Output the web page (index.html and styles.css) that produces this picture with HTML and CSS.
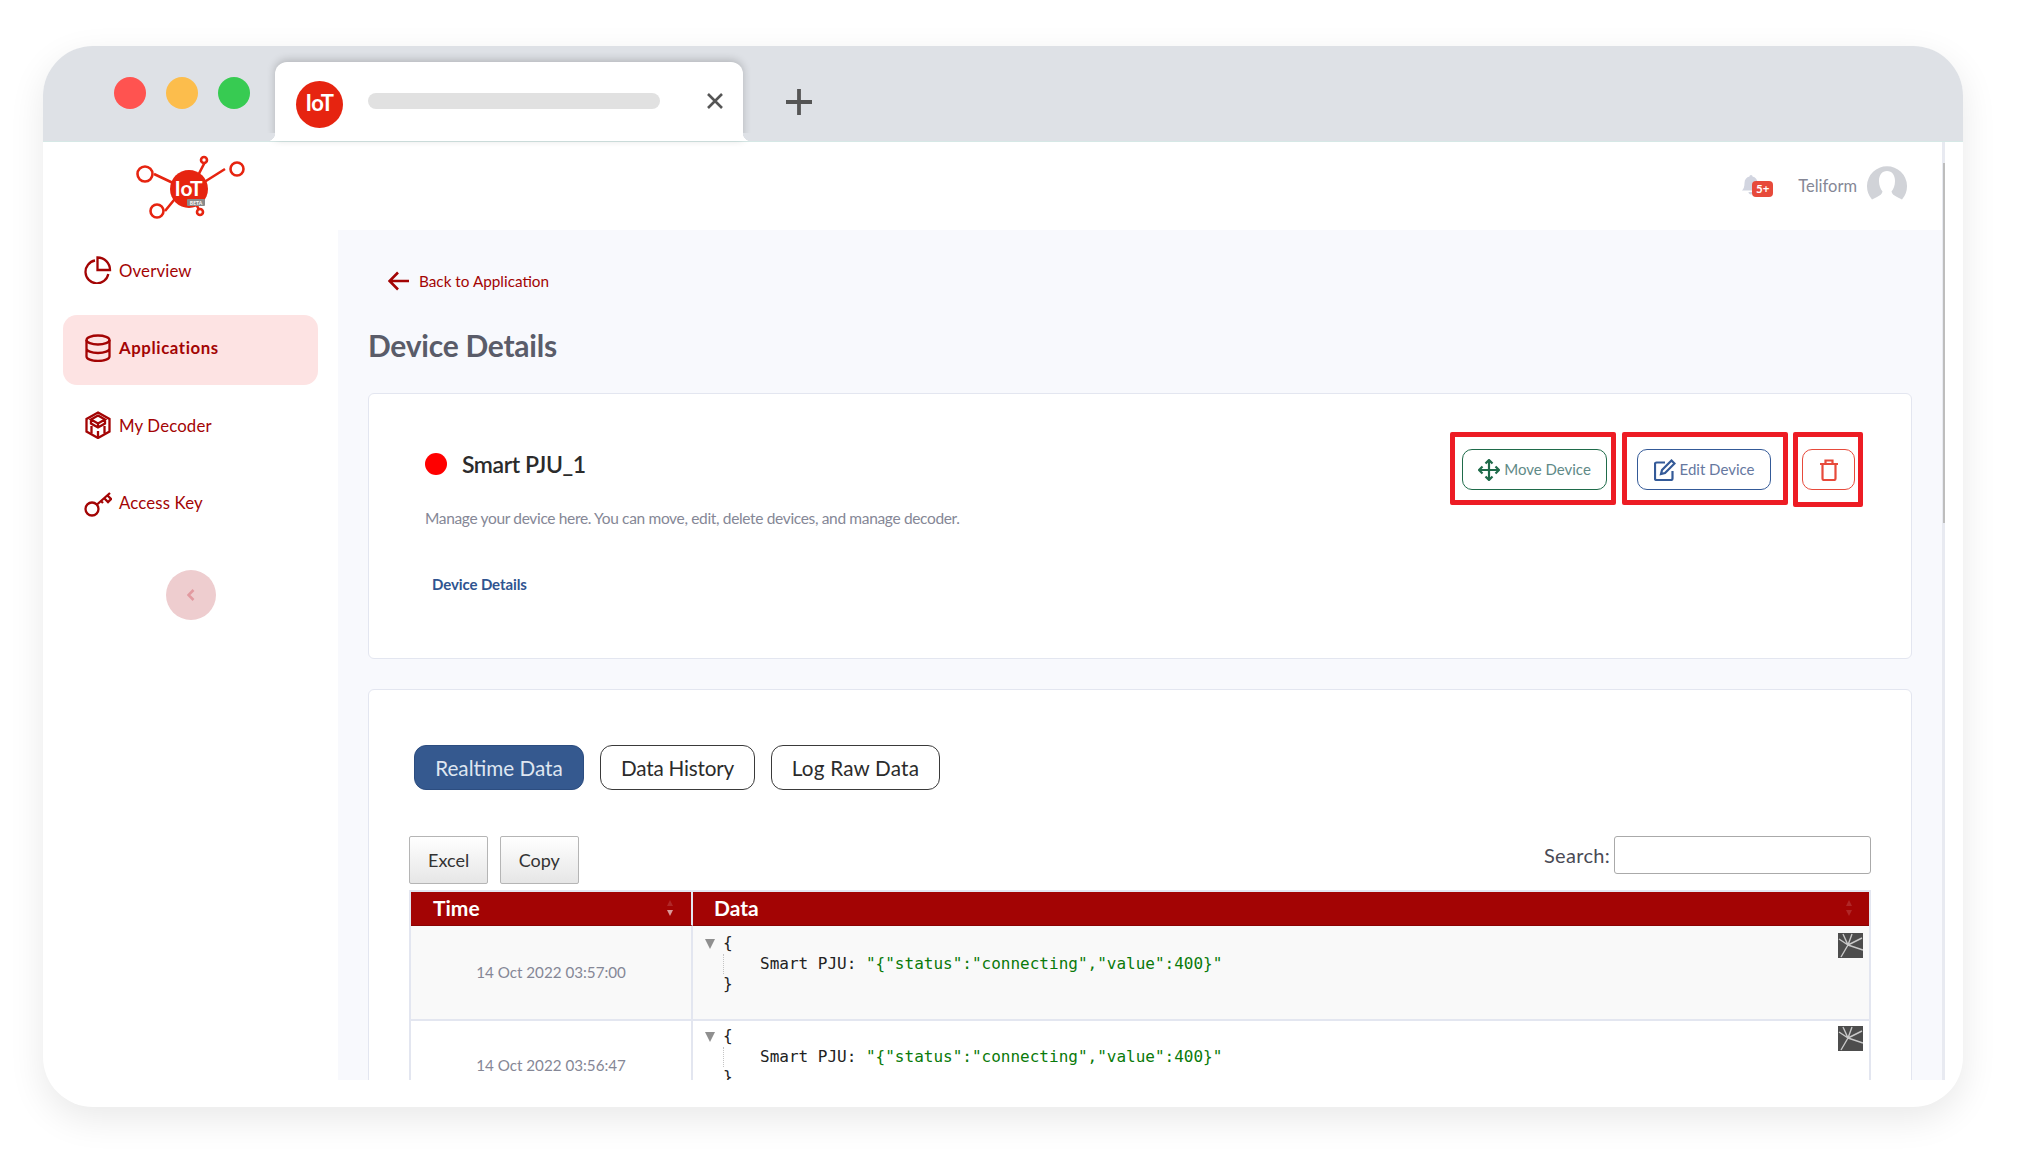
FILE: index.html
```html
<!DOCTYPE html>
<html lang="en">
<head>
<meta charset="utf-8">
<title>Device Details</title>
<link rel="stylesheet" href="styles.css">
</head>
<body>
<div class="window">
  <header class="chrome">
    <div class="lights"><span class="light red"></span><span class="light yellow"></span><span class="light green"></span></div>
    <div class="tab">
      <span class="favicon">IoT</span>
      <span class="tab-title"></span>
      <svg class="tab-close" viewBox="0 0 16 16"><path d="M1 1l14 14M15 1L1 15"/></svg>
    </div>
    <svg class="tab-new" viewBox="0 0 26 26"><path d="M13 0v26M0 13h26"/></svg>
  </header>
  <div class="app">
    <aside class="sidebar">
      <div class="logo">
        <svg viewBox="0 0 120 70" width="120" height="70">
          <g class="logo-lines">
            <path d="M26 25L62 42M62 42L97 20M55 40L37 62M62 42L78 11M62 42L72 63"/>
            <circle cx="17" cy="25" r="7.5"/><circle cx="109" cy="20" r="6.5"/><circle cx="29" cy="62" r="6.5"/><circle cx="76" cy="11" r="3"/><circle cx="72" cy="63" r="3"/>
          </g>
          <circle class="logo-core" cx="61" cy="40" r="19"/>
          <text class="logo-text" x="60.5" y="47" text-anchor="middle">IoT</text>
          <rect class="logo-beta-bg" x="59" y="50" width="18" height="7" rx="1"/>
          <text class="logo-beta" x="68" y="55.6" text-anchor="middle">BETA</text>
        </svg>
      </div>
      <nav class="nav">
        <a class="nav-item">
          <svg class="nav-icon" viewBox="0 0 28 28"><path d="M11 4.5a11.5 11.5 0 1 0 13.300 13.500"/><path d="M13.500 1.500V14H26A12.500 12.500 0 0 0 13.500 1.500z"/></svg>
          <span>Overview</span>
        </a>
        <a class="nav-item active">
          <svg class="nav-icon" viewBox="0 0 28 28"><ellipse cx="14" cy="6" rx="11.500" ry="4.500"/><path d="M2.500 6v16.500c0 2.500 5 4.500 11.500 4.500s11.500-2 11.500-4.500V6M2.500 14.500c0 2.500 5 4.500 11.500 4.500s11.500-2 11.500-4.500"/></svg>
          <span>Applications</span>
        </a>
        <a class="nav-item">
          <svg class="nav-icon" viewBox="0 0 28 28"><path d="M14 1.500l11.500 6.500v12.500L14 27 2.500 20.500V8z"/><path d="M14 4.500l7 4-7 4-7-4zM14 12.500V16M7 8.500v4L14 16.500l7-4v-4M7.500 15v7.500M20.500 15v7.500M14 20v6"/></svg>
          <span>My Decoder</span>
        </a>
        <a class="nav-item">
          <svg class="nav-icon" viewBox="0 0 28 28"><circle cx="8" cy="20" r="6.500"/><path d="M13 15.500L26 4M20 9l4 4 3-3-4-4M17 12l2 2"/></svg>
          <span>Access Key</span>
        </a>
      </nav>
      <button class="collapse"><svg viewBox="0 0 8 12" width="8" height="12"><path d="M6.500 1L1.500 6l5 5"/></svg></button>
    </aside>
    <div class="page">
      <div class="topbar">
        <span class="bell">
          <svg viewBox="0 0 20 22" width="20" height="22"><path d="M10 1c1 0 1.500.8 1.500 1.500 3 .8 5 3 5 6.500 0 4 1 6 2.500 7.500H1C2.500 15 3.500 13 3.500 9c0-3.500 2-5.700 5-6.500C8.500 1.800 9 1 10 1zM7.500 18h5c0 1.500-1 2.500-2.500 2.500S7.500 19.500 7.500 18z"/></svg>
          <span class="badge">5+</span>
        </span>
        <span class="username">Teliform</span>
        <svg class="avatar" viewBox="0 0 40 40" width="40" height="40"><path class="avatar-bg" d="M5 34.500A20 20 0 1 1 35 34.500L30 32c-3-1.500-5-3-5.500-5.500 2-2.500 3.500-6 3.500-10.500C28 10 25 6 20 6S12 10 12 16c0 4.500 1.500 8 3.500 10.500C15 29 13 30.500 10 32z"/></svg>
      </div>
      <main class="main">
        <a class="back">
          <svg viewBox="0 0 22 20" width="22" height="20"><path d="M21 10H2M10 1.500L1.500 10l8.500 8.500"/></svg>
          <span>Back to Application</span>
        </a>
        <h1 class="heading">Device Details</h1>
        <section class="card card-device">
          <div class="device-info">
            <div class="device-title"><span class="status-dot"></span><span class="device-name">Smart PJU_1</span></div>
            <p class="device-sub">Manage your device here. You can move, edit, delete devices, and manage decoder.</p>
            <a class="device-link">Device Details</a>
          </div>
          <div class="actions">
            <button class="btn btn-move">
              <svg viewBox="0 0 22 22" width="22" height="22"><path d="M11 1v20M1 11h20M7.500 4.500L11 1l3.500 3.500M7.500 17.500L11 21l3.500-3.500M4.500 7.500L1 11l3.500 3.500M17.500 7.500L21 11l-3.500 3.500"/></svg>
              <span>Move Device</span>
            </button>
            <button class="btn btn-edit">
              <svg viewBox="0 0 22 22" width="22" height="22"><path d="M11 3.500H2.500a1.500 1.500 0 0 0-1.500 1.500v14.500A1.500 1.500 0 0 0 2.500 21H17a1.500 1.500 0 0 0 1.500-1.500V12"/><path d="M8 11L17.500 1.500l3 3L11 14l-4 1z"/></svg>
              <span>Edit Device</span>
            </button>
            <button class="btn btn-delete">
              <svg viewBox="0 0 20 22" width="20" height="22"><path d="M1 5h18M6.500 5V1.500h7V5M3.500 5v14.500a1.500 1.500 0 0 0 1.500 1.500h10a1.500 1.500 0 0 0 1.500-1.500V5"/></svg>
            </button>
          </div>
        </section>
        <section class="card card-data">
          <div class="tabs">
            <button class="tab-btn tab-realtime on">Realtime Data</button>
            <button class="tab-btn tab-history">Data History</button>
            <button class="tab-btn tab-log">Log Raw Data</button>
          </div>
          <div class="toolbar">
            <div class="export"><button class="export-btn">Excel</button><button class="export-btn">Copy</button></div>
            <label class="search">Search:<input class="search-input" type="text"></label>
          </div>
          <table class="table">
            <thead>
              <tr>
                <th class="col-time">Time<span class="sort"><i class="up"></i><i class="down on"></i></span></th>
                <th class="col-data">Data<span class="sort end"><i class="up"></i><i class="down"></i></span></th>
              </tr>
            </thead>
            <tbody>
              <tr class="odd">
                <td class="time">14 Oct 2022 03:57:00</td>
                <td class="data">
                  <div class="cell">
                    <div class="json">
                      <span class="caret"></span>
                      <div class="json-line">{</div>
                      <div class="json-body">Smart PJU: <span class="str">"{"status":"connecting","value":400}"</span></div>
                      <div class="json-line">}</div>
                    </div>
                    <svg class="broken" viewBox="0 0 25 25" width="25" height="25"><rect width="25" height="25"/><path d="M10 12L1 6M10 12L5 1M10 12L14 1M10 12L3 24M10 12L24 5M10 12L25 17"/></svg>
                  </div>
                </td>
              </tr>
              <tr>
                <td class="time">14 Oct 2022 03:56:47</td>
                <td class="data">
                  <div class="cell">
                    <div class="json">
                      <span class="caret"></span>
                      <div class="json-line">{</div>
                      <div class="json-body">Smart PJU: <span class="str">"{"status":"connecting","value":400}"</span></div>
                      <div class="json-line">}</div>
                    </div>
                    <svg class="broken" viewBox="0 0 25 25" width="25" height="25"><rect width="25" height="25"/><path d="M10 12L1 6M10 12L5 1M10 12L14 1M10 12L3 24M10 12L24 5M10 12L25 17"/></svg>
                  </div>
                </td>
              </tr>
            </tbody>
          </table>
        </section>
      </main>
    </div>
    <div class="scrollbar"><span class="thumb"></span></div>
  </div>
</div>
</body>
</html>
```

FILE: styles.css
```css
* { box-sizing: border-box; }
html, body { margin: 0; height: 100%; }
body {
  background: #fff;
  padding: 46px 0 0 43px;
  font-family: "Lato", "Liberation Sans", sans-serif;
  overflow: hidden;
}
button { font-family: inherit; cursor: pointer; }
p, h1 { margin: 0; }

.window {
  width: 1920px;
  height: 1061px;
  background: #fff;
  border-radius: 50px;
  box-shadow: 0 12px 36px rgba(0, 0, 0, .09);
  overflow: hidden;
  padding-bottom: 27px;
  display: flex;
  flex-direction: column;
}

.chrome {
  height: 96px;
  flex: none;
  background: #dee1e6;
  border-bottom: 1px solid #d6e8e6;
  display: flex;
  padding: 16px 0 0 71px;
}
.lights { display: flex; gap: 20px; padding-top: 15px; }
.light { width: 32px; height: 32px; border-radius: 50%; }
.light.red { background: #ff5350; }
.light.yellow { background: #fcbd4c; }
.light.green { background: #37cb52; }
.tab {
  position: relative;
  width: 468px;
  height: 79px;
  margin-left: 25px;
  background: #fff;
  border-radius: 12px 12px 0 0;
  box-shadow: 0 -2px 8px rgba(0, 0, 0, .2);
  display: flex;
  align-items: flex-start;
  padding: 19px 19px 0 21px;
}
.tab::before, .tab::after {
  content: "";
  position: absolute;
  bottom: 0;
  width: 8px;
  height: 8px;
}
.tab::before { left: -8px; background: radial-gradient(circle at 0 0, #dee1e6 8px, #fff 8.500px); }
.tab::after { right: -8px; background: radial-gradient(circle at 100% 0, #dee1e6 8px, #fff 8.500px); }
.favicon {
  width: 47px;
  height: 47px;
  border-radius: 50%;
  background: #e62410;
  color: #fff;
  font-weight: 700;
  font-size: 22px;
  letter-spacing: -.5px;
  line-height: 44px;
  text-align: center;
  flex: none;
}
.tab-title {
  width: 292px;
  height: 16px;
  margin: 12px 47px 0 25px;
  background: #e1e1e1;
  border-radius: 8px;
  flex: none;
}
.tab-close {
  width: 16px;
  height: 16px;
  margin-top: 12px;
  flex: none;
  fill: none;
  stroke: #555;
  stroke-width: 2.600;
}
.tab-new {
  width: 26px;
  height: 26px;
  margin: 27px 0 0 43px;
  fill: none;
  stroke: #555;
  stroke-width: 3.800;
}

.app {
  flex: 1;
  min-height: 0;
  display: flex;
  padding-right: 18px;
}
.sidebar {
  width: 295px;
  flex: none;
  padding: 0 20px;
  display: flex;
  flex-direction: column;
}
.logo {
  height: 88px;
  flex: none;
  margin-left: -5px;
  padding-top: 7px;
  display: flex;
  justify-content: center;
}
.logo-lines { fill: #fff; stroke: #e62410; stroke-width: 2.600; }
.logo-core { fill: #e62410; }
.logo-text { fill: #fff; font-size: 21px; font-weight: 700; font-family: "Lato", sans-serif; }
.logo-beta-bg { fill: #8a8a8a; }
.logo-beta { fill: #fff; font-size: 5px; font-weight: 700; font-family: "Lato", sans-serif; }

.nav { display: flex; flex-direction: column; gap: 7.600px; margin-top: 7px; }
.nav-item {
  height: 70px;
  border-radius: 14px;
  padding: 0 0 4px 21px;
  display: flex;
  align-items: center;
  gap: 7px;
  color: #a30404;
  font-size: 16.800px;
  letter-spacing: .15px;
}
.nav-item.active { background: #fde3e3; font-weight: 700; letter-spacing: .6px; }
.nav-icon {
  width: 28px;
  height: 28px;
  fill: none;
  stroke: #a30404;
  stroke-width: 2.300;
  flex: none;
}
.collapse {
  width: 50px;
  height: 50px;
  margin: 30px auto 0;
  border: 0;
  border-radius: 50%;
  background: #eecdcf;
  display: flex;
  align-items: center;
  justify-content: center;
}
.collapse svg { fill: none; stroke: #e29aa0; stroke-width: 2.600; }

.page { flex: 1; min-width: 0; display: flex; flex-direction: column; }
.topbar {
  height: 88px;
  flex: none;
  display: flex;
  align-items: center;
  padding: 0 35px 0 0;
  justify-content: flex-end;
}
.bell { position: relative; width: 34px; height: 22px; margin-right: 23px; top: -1px; }
.bell svg { fill: #d2d5e0; }
.badge {
  position: absolute;
  left: 11px;
  top: 7px;
  width: 21px;
  height: 16px;
  border-radius: 4px;
  background: #e74a3b;
  color: #fff;
  font-size: 11.500px;
  font-weight: 700;
  line-height: 16px;
  text-align: center;
}
.username { color: #858796; font-size: 16.500px; margin-right: 10px; }
.avatar { margin-top: -2px; }
.avatar-bg { fill: #d1d3d8; }

.main {
  flex: 1;
  min-height: 0;
  overflow: hidden;
  background: #f8f9fd;
  padding: 41px 30px 0;
}
.back {
  display: flex;
  align-items: center;
  gap: 9px;
  height: 20px;
  margin-left: 20px;
  color: #a30404;
  font-size: 15.300px;
}
.back svg { fill: none; stroke: #a30404; stroke-width: 2.600; }
.heading {
  margin-top: 34px;
  height: 40px;
  line-height: 40px;
  color: #5a5c69;
  font-size: 30px;
  font-weight: 700;
  letter-spacing: -.25px;
}
.card {
  background: #fff;
  border: 1px solid #e3e6f0;
  border-radius: 6px;
}
.card-device {
  margin-top: 28px;
  height: 266px;
  padding: 55px 56px 0 56px;
  display: flex;
  justify-content: space-between;
  align-items: flex-start;
}
.device-info { margin-top: -1px; }
.device-title { display: flex; align-items: center; gap: 15px; height: 32px; }
.status-dot { width: 22px; height: 22px; border-radius: 50%; background: #f00; }
.device-name { color: #2b2b2b; font-size: 23px; font-weight: 600; letter-spacing: -.45px; }
.device-sub {
  margin-top: 28px;
  line-height: 20px;
  color: #858796;
  font-size: 15.500px;
  letter-spacing: -.34px;
}
.device-link {
  display: block;
  margin: 46px 0 0 7px;
  line-height: 20px;
  color: #2f5490;
  font-size: 15px;
  font-weight: 700;
  letter-spacing: -.1px;
}
.actions { display: flex; gap: 30px; }
.btn {
  position: relative;
  height: 41px;
  background: #fff;
  border-radius: 10px;
  border: 1px solid;
  padding: 0;
  display: flex;
  align-items: center;
  justify-content: center;
  gap: 4px;
  font-size: 15px;
}
.btn svg { fill: none; stroke-width: 2.200; }
.btn span { position: relative; top: -1px; }
.btn::after {
  content: "";
  position: absolute;
  border: 5px solid #ed1c24;
  border-radius: 2px;
  pointer-events: none;
}
.btn-move { width: 145px; border-color: #1f6b4a; color: #5f8a87; }
.btn-move svg { stroke: #1f6b4a; }
.btn-move::after { inset: -18px -10px -16px -13px; }
.btn-edit { width: 134px; border-color: #345a98; color: #66789f; }
.btn-edit svg { stroke: #345a98; }
.btn-edit::after { inset: -18px -18px -16px -16px; }
.btn-delete { width: 53px; margin-left: 1px; border-color: #e74a3b; }
.btn-delete svg { stroke: #e74a3b; }
.btn-delete::after { inset: -18px -9px -18px -10px; }

.card-data {
  margin-top: 30px;
  padding: 55px 40px 0;
}
.tabs { display: flex; gap: 16px; margin-left: 5px; }
.tab-btn {
  height: 45px;
  padding: 0;
  border: 1px solid #3a3a3a;
  border-radius: 12px;
  background: #fff;
  color: #2b2b2b;
  font-size: 20.700px;
}
.tab-realtime { width: 170px; }
.tab-history { width: 155px; letter-spacing: -.2px; }
.tab-log { width: 169px; letter-spacing: .2px; }
.tab-btn.on { background: #35598f; color: #dfe6f1; border-color: #2c4d80; }
.toolbar {
  margin-top: 46px;
  display: flex;
  justify-content: space-between;
  align-items: flex-start;
}
.export { display: flex; gap: 11.500px; }
.export-btn {
  height: 48px;
  padding: 0 18px;
  border: 1px solid #b5b5b5;
  border-radius: 2px;
  background: linear-gradient(#fff, #e6e6e6);
  color: #333;
  font-size: 18px;
}
.search { display: flex; align-items: center; gap: 4px; color: #4a4a55; font-size: 20px; letter-spacing: .3px; }
.search-input {
  width: 257px;
  height: 38px;
  border: 1px solid #aaa;
  border-radius: 3px;
  background: #fff;
}
.table {
  width: 100%;
  margin-top: 6px;
  border-collapse: separate;
  border-spacing: 0;
  table-layout: fixed;
  border: 2px solid #e3e6f0;
  border-bottom: 0;
}
.table th {
  position: relative;
  height: 34px;
  padding: 0 0 2px 21px;
  background: #a30404;
  border-bottom: 1px solid #8a0303;
  color: #fff;
  font-size: 21px;
  font-weight: 700;
  text-align: left;
}
.table th.col-time { width: 282px; padding-left: 22px; border-right: 2px solid #e3e6f0; }
.table th.col-data { padding-left: 21px; }
.sort { position: absolute; right: 18px; top: 8px; display: flex; flex-direction: column; gap: 4px; }
.sort.end { right: 17px; }
.sort i { display: block; width: 0; height: 0; border-left: 3.500px solid transparent; border-right: 3.500px solid transparent; }
.sort .up { border-bottom: 6px solid rgba(255, 255, 255, .14); }
.sort .down { border-top: 6px solid rgba(255, 255, 255, .14); }
.sort .down.on { border-top-color: rgba(255, 255, 255, .6); }
.table td { height: 93px; padding: 0; vertical-align: top; }
.table tr + tr td { border-top: 2px solid #e3e6f0; }
.table tr.odd td { background: #f9f9f9; }
.table td.time {
  border-right: 2px solid #e3e6f0;
  padding-bottom: 1px;
  color: #858796;
  font-size: 15.200px;
  text-align: center;
  vertical-align: middle;
}
.table tr + tr td.time { padding-bottom: 4px; }
.cell {
  padding: 7px 6px 0 0;
  height: 91px;
  display: flex;
  justify-content: space-between;
  align-items: flex-start;
}
.table tr + tr .cell { padding-top: 5px; }
.json {
  position: relative;
  padding-left: 30px;
  font-family: "DejaVu Sans Mono", monospace;
  font-size: 16px;
  line-height: 20.500px;
  color: #222;
}
.caret {
  position: absolute;
  left: 12px;
  top: 6px;
  width: 0;
  height: 0;
  border-left: 5px solid transparent;
  border-right: 5px solid transparent;
  border-top: 10px solid #8f8f8f;
}
.json-body {
  padding-left: 36px;
  border-left: 1px dotted #c4c4c4;
}
.str { color: #0a7a0a; }
.broken { flex: none; }
.broken rect { fill: #4d4d4d; }
.broken path { fill: none; stroke: #c9c9c9; stroke-width: 1.400; }

.scrollbar { width: 3px; flex: none; background: #e8eaf1; padding: 21px 0 0 1px; }
.thumb { display: block; height: 360px; background: #bdbdbd; }
```
